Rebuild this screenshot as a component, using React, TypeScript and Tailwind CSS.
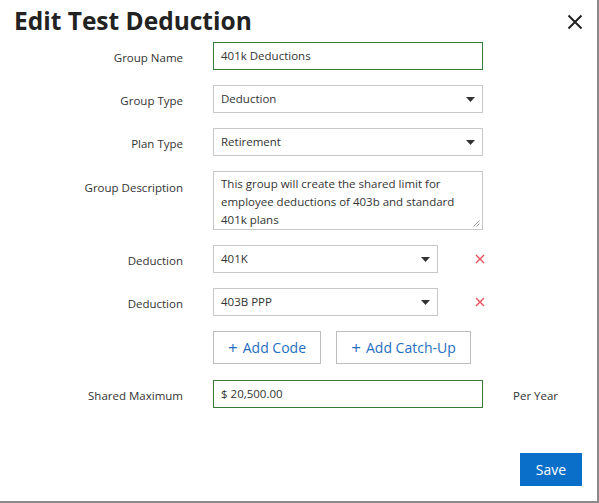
const font = { fontFamily: '"Open Sans", "Noto Sans", sans-serif' };

function Label({ children }: { children: React.ReactNode }) {
  return <div className="w-[184px] shrink-0 pt-[3px] pr-[1px] text-right text-[11.5px] text-[#333]">{children}</div>;
}

function Caret() {
  return (
    <svg width="9" height="5" viewBox="0 0 9 5" className="shrink-0">
      <path d="M0 0h9L4.5 5z" fill="#333" />
    </svg>
  );
}

function Select({ value, width }: { value: string; width: string }) {
  return (
    <div className={`${width} flex h-[28px] items-center justify-between border border-[#c8c8c8] bg-white pl-[7px] pr-[7px] text-[11.5px] text-[#333]`}>
      <span>{value}</span>
      <Caret />
    </div>
  );
}

function RemoveX() {
  return (
    <svg width="10" height="10" viewBox="0 0 10 10" className="ml-[8px]">
      <path d="M1 1l8 8M9 1l-8 8" stroke="#e8505b" strokeWidth="1.4" />
    </svg>
  );
}

export default function App() {
  return (
    <div className="relative h-[503px] w-[599px] border-r-2 border-b-2 border-[#8a8a8a] bg-white" style={font}>
      <div className="flex items-start justify-between pl-[14px] pr-[14px] pt-[4px]">
        <h1 className="text-[24.5px] font-bold leading-[33px] text-[#222]">Edit Test Deduction</h1>
        <svg width="16" height="16" viewBox="0 0 16 16" className="mt-[10px]">
          <path d="M1.5 1.5l13 13M14.5 1.5l-13 13" stroke="#222" strokeWidth="2" />
        </svg>
      </div>

      <div className="flex flex-col pt-[5px]">
        <div className="flex items-center gap-[29px]">
          <Label>Group Name</Label>
          <div className="flex h-[28px] w-[270px] items-center border border-[#3b7a3b] pl-[7px] text-[11.5px] text-[#333]">
            401k Deductions
          </div>
        </div>

        <div className="mt-[15px] flex items-center gap-[29px]">
          <Label>Group Type</Label>
          <Select value="Deduction" width="w-[270px]" />
        </div>

        <div className="mt-[15px] flex items-center gap-[29px]">
          <Label>Plan Type</Label>
          <Select value="Retirement" width="w-[270px]" />
        </div>

        <div className="mt-[15px] flex items-start gap-[29px]">
          <Label>
            <div className="pt-[5px]">Group Description</div>
          </Label>
          <div className="relative h-[59px] w-[270px] border border-[#c8c8c8] px-[7px] pt-[3px] text-[11.5px] leading-[18px] text-[#333]">
            This group will create the shared limit for employee deductions of 403b and standard 401k plans
            <svg width="7" height="7" viewBox="0 0 7 7" className="absolute right-[2px] bottom-[2px]">
              <path d="M6.5 0.5L0.5 6.5M6.5 3.5L3.5 6.5" stroke="#777" strokeWidth="0.8" />
            </svg>
          </div>
        </div>

        <div className="mt-[15px] flex items-center gap-[29px]">
          <Label>Deduction</Label>
          <Select value="401K" width="w-[225px]" />
          <RemoveX />
        </div>

        <div className="mt-[15px] flex items-center gap-[29px]">
          <Label>Deduction</Label>
          <Select value="403B PPP" width="w-[225px]" />
          <RemoveX />
        </div>

        <div className="mt-[15px] flex items-center gap-[15px] pl-[213px]">
          <button className="flex h-[33px] w-[108px] items-center justify-center gap-[5px] border border-[#bdbdbd] bg-white text-[14px] text-[#1f6fc0]">
            <span className="text-[17px] leading-none">+</span>
            <span>Add Code</span>
          </button>
          <button className="flex h-[33px] w-[135px] items-center justify-center gap-[5px] border border-[#bdbdbd] bg-white text-[14px] text-[#1f6fc0]">
            <span className="text-[17px] leading-none">+</span>
            <span>Add Catch-Up</span>
          </button>
        </div>

        <div className="mt-[16px] flex items-center gap-[29px]">
          <Label>Shared Maximum</Label>
          <div className="flex h-[28px] w-[270px] items-center border border-[#3b7a3b] pl-[7px] text-[11.5px] text-[#333]">
            $ 20,500.00
          </div>
          <span className="ml-[1px] pt-[3px] text-[11.5px] text-[#333]">Per Year</span>
        </div>
      </div>

      <button className="absolute right-[15px] bottom-[15px] h-[33px] w-[62px] bg-[#0a6fc8] text-[14px] text-white">
        Save
      </button>
    </div>
  );
}
